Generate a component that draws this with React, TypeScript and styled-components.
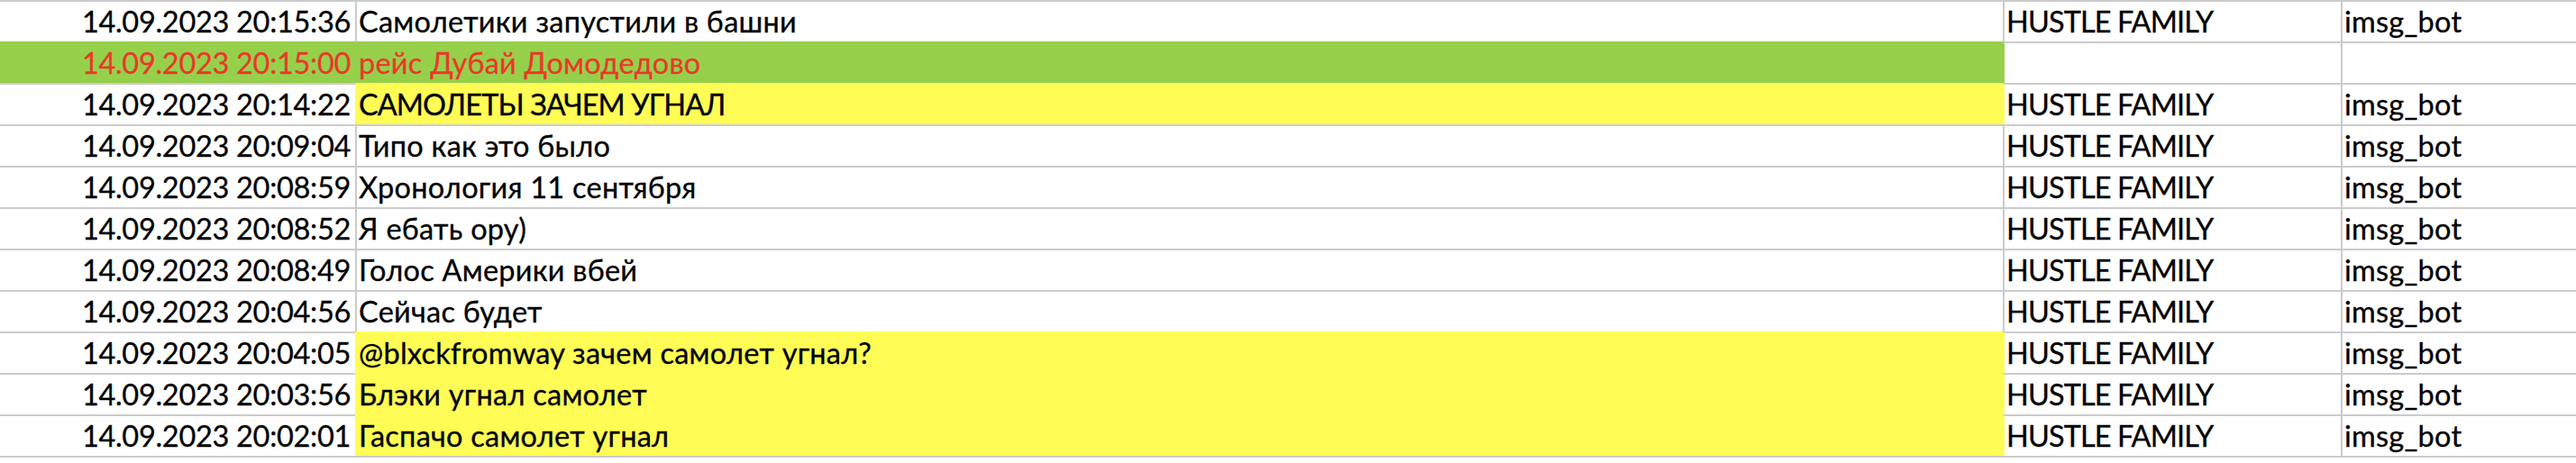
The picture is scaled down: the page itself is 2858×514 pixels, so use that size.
import React from "react";
import styled, { createGlobalStyle } from "styled-components";

const GRID = "#cbcbcb";
const GREEN = "#96d04a";
const YELLOW = "#fffd55";
const RED = "#e8392a";

const Global = createGlobalStyle`
  html, body {
    margin: 0;
    padding: 0;
    background: #ffffff;
  }
  body {
    font-family: Lato, "Noto Sans", "Liberation Sans", sans-serif;
  }
`;

const Sheet = styled.div`
  display: grid;
  grid-template-columns: 394px 1828px 375px 1fr;
  width: 2858px;
  border-bottom: 2px solid ${GRID};
  background: #ffffff;
`;

type Tracking = "date" | "text" | "caps";

const trackingValue: Record<Tracking, string> = {
  date: "-0.3px",
  text: "0.25px",
  caps: "-0.9px",
};

const Cell = styled.div<{
  $fill?: string;
  $color?: string;
  $align?: "left" | "right";
  $first?: boolean;
  $leftLine?: string;
  $tracking?: Tracking;
}>`
  box-sizing: border-box;
  height: 46px;
  border-top: 2px solid ${(p) => p.$fill ?? GRID};
  border-left: ${(p) => (p.$first ? "0" : `2px solid ${p.$leftLine ?? p.$fill ?? GRID}`)};
  background: ${(p) => p.$fill ?? "transparent"};
  color: ${(p) => p.$color ?? "#000000"};
  font-size: 32.5px;
  line-height: 44px;
  letter-spacing: ${(p) => trackingValue[p.$tracking ?? "text"]};
  -webkit-text-stroke: 0.3px currentColor;
  white-space: nowrap;
  overflow: hidden;
  text-align: ${(p) => p.$align ?? "left"};
  padding: ${(p) => (p.$align === "right" ? "0 5px 0 0" : "0 0 0 2px")};
`;

type Row = {
  time: string;
  text: string;
  chat?: string;
  user?: string;
  kind?: "green" | "yellow";
};

const rows: Row[] = [
  { time: "14.09.2023 20:15:36", text: "Самолетики запустили в башни", chat: "HUSTLE FAMILY", user: "imsg_bot" },
  { time: "14.09.2023 20:15:00", text: "рейс Дубай Домодедово", kind: "green" },
  { time: "14.09.2023 20:14:22", text: "САМОЛЕТЫ ЗАЧЕМ УГНАЛ", chat: "HUSTLE FAMILY", user: "imsg_bot", kind: "yellow" },
  { time: "14.09.2023 20:09:04", text: "Типо как это было", chat: "HUSTLE FAMILY", user: "imsg_bot" },
  { time: "14.09.2023 20:08:59", text: "Хронология 11 сентября", chat: "HUSTLE FAMILY", user: "imsg_bot" },
  { time: "14.09.2023 20:08:52", text: "Я ебать ору)", chat: "HUSTLE FAMILY", user: "imsg_bot" },
  { time: "14.09.2023 20:08:49", text: "Голос Америки вбей", chat: "HUSTLE FAMILY", user: "imsg_bot" },
  { time: "14.09.2023 20:04:56", text: "Сейчас будет", chat: "HUSTLE FAMILY", user: "imsg_bot" },
  { time: "14.09.2023 20:04:05", text: "@blxckfromway зачем самолет угнал?", chat: "HUSTLE FAMILY", user: "imsg_bot", kind: "yellow" },
  { time: "14.09.2023 20:03:56", text: "Блэки угнал самолет", chat: "HUSTLE FAMILY", user: "imsg_bot", kind: "yellow" },
  { time: "14.09.2023 20:02:01", text: "Гаспачо самолет угнал", chat: "HUSTLE FAMILY", user: "imsg_bot", kind: "yellow" },
];

const isCaps = (s: string) => s === s.toUpperCase();

export default function App() {
  return (
    <>
      <Global />
      <Sheet>
        {rows.map((r, i) => {
          const green = r.kind === "green";
          const yellow = r.kind === "yellow";
          const textFill = green ? GREEN : yellow ? YELLOW : undefined;
          return (
            <React.Fragment key={i}>
              <Cell
                $first
                $align="right"
                $tracking="date"
                $fill={green ? GREEN : undefined}
                $color={green ? RED : undefined}
              >
                {r.time}
              </Cell>
              <Cell
                $fill={textFill}
                $color={green ? RED : undefined}
                $tracking={isCaps(r.text) ? "caps" : "text"}
              >
                {r.text}
              </Cell>
              <Cell $leftLine={textFill} $tracking="caps">
                {r.chat ?? ""}
              </Cell>
              <Cell $tracking="text">{r.user ?? ""}</Cell>
            </React.Fragment>
          );
        })}
      </Sheet>
    </>
  );
}
